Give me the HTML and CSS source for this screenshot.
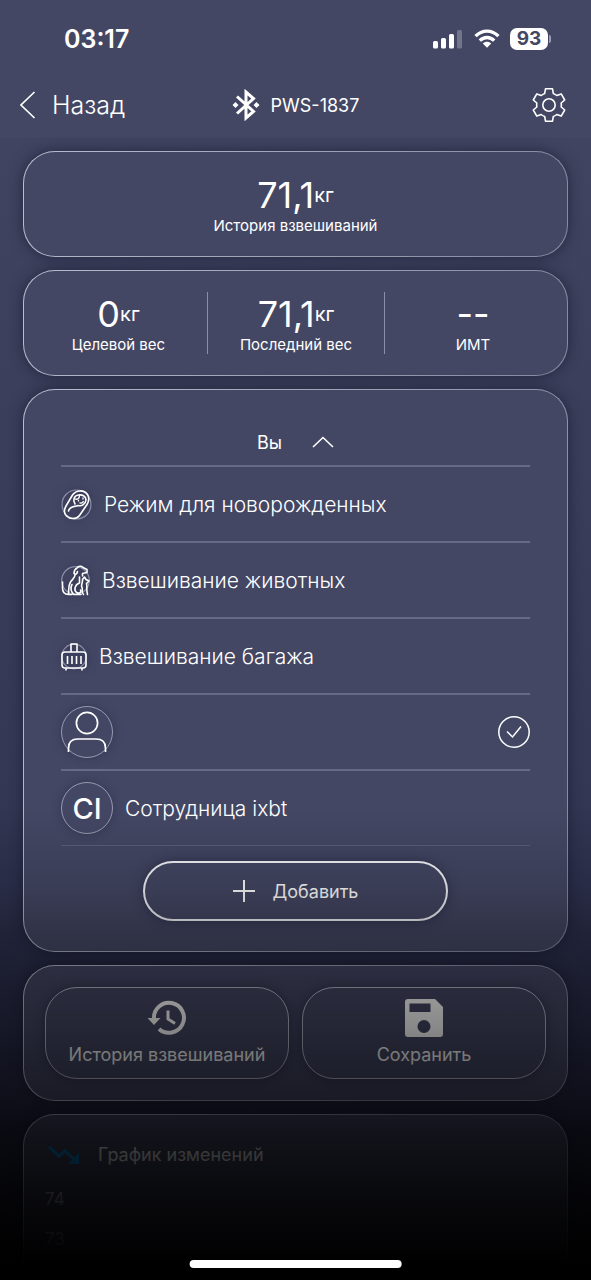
FILE: index.html
```html
<!DOCTYPE html>
<html lang="ru">
<head>
<meta charset="utf-8">
<meta name="viewport" content="width=device-width, initial-scale=1">
<title>PWS-1837</title>
<link rel="stylesheet" href="styles.css">
</head>
<body>
<div class="app">
  <div class="status">
    <span class="clock">03:17</span>
    <div class="status-icons">
      <svg width="31" height="20" viewBox="0 0 31 20" fill="#fff" aria-hidden="true">
        <rect x="0" y="12" width="5" height="7.500" rx="1.600"/>
        <rect x="8" y="9" width="5" height="10.500" rx="1.600"/>
        <rect x="16" y="5" width="5" height="14.500" rx="1.600"/>
        <rect x="24" y="1" width="5" height="18.500" rx="1.600" opacity=".25"/>
      </svg>
      <svg width="26" height="20" viewBox="0 0 26 20" fill="none" stroke="#fff" stroke-width="3.4" aria-hidden="true">
        <path d="M1.600 7.200C8 .4 18 .4 24.400 7.200"/>
        <path d="M5.800 11.600C10 7.500 16 7.500 20.200 11.600"/>
        <path d="M8.800 14.400C11 12.200 15 12.200 17.200 14.400L13 18.800Z" fill="#fff" stroke="none"/>
      </svg>
      <div class="battery"><span class="battery-level">93</span><span class="battery-tip"></span></div>
    </div>
  </div>

  <header class="topbar">
    <button class="back" type="button">
      <svg width="16" height="28" viewBox="0 0 16 28" fill="none" stroke="#fff" stroke-width="1.600" aria-hidden="true"><path d="M14.500 1L1 14L14.500 27"/></svg>
      <span>Назад</span>
    </button>
    <h1 class="device">
      <svg width="28" height="32" viewBox="0 0 28 32" fill="none" stroke="#fff" stroke-width="3" aria-hidden="true">
        <path d="M5 7.500L21.500 22.500L14 29V3L21.500 9.500L5 24.500"/>
        <path d="M3.500 13L6.500 16L3.500 19L.5 16ZM24.500 13L27.500 16L24.500 19L21.500 16Z" fill="#fff" stroke="none"/>
      </svg>
      <span>PWS-1837</span>
    </h1>
    <button class="settings" type="button" aria-label="Настройки">
      <svg width="34" height="36" viewBox="0 0 34 36" fill="none" stroke="#fff" stroke-width="1.600" stroke-linejoin="round" aria-hidden="true">
        <circle cx="17" cy="18" r="6.200"/>
        <path d="M13.500 1.800H20.500L21.300 6.400Q23 7 24.800 8.500L29.200 6.900L32.700 13L29.200 16Q29.500 18 29.200 20L32.700 23L29.200 29.100L24.800 27.500Q23 29 21.300 29.600L20.500 34.200H13.500L12.700 29.600Q11 29 9.200 27.500L4.800 29.100L1.300 23L4.800 20Q4.500 18 4.800 16L1.300 13L4.800 6.900L9.200 8.500Q11 7 12.700 6.400Z"/>
      </svg>
    </button>
  </header>

  <main class="content">
    <section class="card weight">
      <div class="value">71,1<span class="unit">кг</span></div>
      <div class="label">История взвешиваний</div>
    </section>

    <section class="card stats">
      <div class="stat"><div class="value">0<span class="unit">кг</span></div><div class="label">Целевой вес</div></div>
      <div class="stat"><div class="value">71,1<span class="unit">кг</span></div><div class="label">Последний вес</div></div>
      <div class="stat"><div class="value">--</div><div class="label">ИМТ</div></div>
    </section>

    <section class="card users">
      <button class="toggle" type="button" aria-expanded="true">
        <span>Вы</span>
        <svg width="22" height="12" viewBox="0 0 22 12" fill="none" stroke="#fff" stroke-width="1.600" aria-hidden="true"><path d="M1 11L11 1.500L21 11"/></svg>
      </button>
      <ul class="list">
        <li><button class="row" type="button">
          <svg class="glyph" width="31" height="31" viewBox="0 0 31 31" fill="none" stroke="#fff" stroke-width="1.600" stroke-linecap="round" aria-hidden="true">
            <circle cx="15.500" cy="15.500" r="14.500" stroke="#8b8fa8" stroke-width="1.200"/>
            <path d="M5 17L11.500 6C15 .8 23 .5 26.500 5.500C28.500 8.500 28 12 26 15.500L18.500 26.500C15.500 30.500 9 30.500 5.500 27C2.500 24 3 20.500 5 17Z"/>
            <path d="M7.500 22C8.500 17 13 18 17 16.500C21 17.500 24.500 15 25 11C25 7 21 5.500 17.500 6C13 6.500 11.500 11 14 15"/>
            <path d="M14 10C17 11 18.500 9 18.500 6.500M22 9V10M17.500 11.500V12M19 14C21 14.300 22 13.500 22.300 12.500" stroke-width="1.300"/>
          </svg>
          <span>Режим для новорожденных</span></button></li>
        <li><button class="row" type="button">
          <svg class="glyph" width="29" height="31" viewBox="0 0 29 31" fill="none" stroke="#fff" stroke-width="1.600" stroke-linecap="round" stroke-linejoin="round" aria-hidden="true">
            <circle cx="14.500" cy="15.500" r="13.800" stroke="#8b8fa8" stroke-width="1.200"/>
            <path d="M16 3C14 4 13 6.500 13 8.500C14.500 10 16 9 16.500 6.500M16 3C17.500 .8 20.500 .8 22 2.500L26 4.500V7.500L21.500 8.500V11"/>
            <path d="M14 10C14 13 11 14.500 9.500 17C7 21 8 24 7.500 29.500H11M7.500 29.500C3 29.500 1.500 27 1.500 23V17"/>
            <path d="M11 19.500C9 22.500 10 27.500 13 29.500H20M18.500 12V18C14 19.500 12.500 25 15.500 27.500C18 29 21 27 19.500 25"/>
            <path d="M21.500 14.500L23.500 12L25 14.500L28 16L25.500 18.500C26.500 22 25 24 26.500 29.500M21.500 14.500C22 18 19.500 20 21 22.500C22 25 20 27 22.500 29.500"/>
          </svg>
          <span>Взвешивание животных</span></button></li>
        <li><button class="row" type="button">
          <svg class="glyph" width="26" height="29" viewBox="0 0 26 29" fill="none" stroke="#fff" stroke-width="1.600" stroke-linejoin="round" aria-hidden="true">
            <circle cx="13" cy="14.500" r="12.300" stroke="#8b8fa8" stroke-width="1.200"/>
            <rect x="1" y="10" width="24" height="16" rx="3"/>
            <path d="M10 10V2H16V10M6.500 14V22M11 14V22M15.500 14V22M20 14V22M5 26V28.500M21 26V28.500"/>
          </svg>
          <span>Взвешивание багажа</span></button></li>
        <li><button class="row" type="button" aria-label="Вы">
          <span class="avatar">
            <svg width="40" height="42" viewBox="0 0 40 42" fill="none" stroke="#fff" stroke-width="1.700" aria-hidden="true"><circle cx="20" cy="12" r="10.600"/><path d="M1.500 41V37Q1.500 28 11 28H29Q38.500 28 38.500 37V41"/></svg>
          </span>
          <svg class="check" width="32" height="32" viewBox="0 0 32 32" fill="none" stroke="#fff" stroke-width="1.500" aria-hidden="true"><circle cx="16" cy="16" r="15.200"/><path d="M9 15.500L14.500 21L23 10.500"/></svg>
        </button></li>
        <li class="last"><button class="row" type="button"><span class="avatar">CI</span><span>Сотрудница ixbt</span></button></li>
      </ul>
      <button class="add" type="button">
        <svg width="22" height="22" viewBox="0 0 22 22" fill="none" stroke="#fff" stroke-width="2" aria-hidden="true"><path d="M11 0V22M0 11H22"/></svg>
        <span>Добавить</span>
      </button>
    </section>

    <section class="card actions">
      <button class="action" type="button">
        <svg width="40" height="40" viewBox="0 0 40 40" fill="none" stroke="#fff" stroke-width="4" aria-hidden="true">
          <path d="M7 21A15 15 0 1 1 12 31"/>
          <path d="M.5 20H13.500L7 27Z" fill="#fff" stroke="none"/>
          <path d="M21 12.500V21L28 25.500" stroke-width="3"/>
        </svg>
        <span>История взвешиваний</span>
      </button>
      <button class="action" type="button">
        <svg width="40" height="40" viewBox="0 0 40 40" aria-hidden="true"><path fill="#fff" fill-rule="evenodd" d="M4 1H31L39 9V36Q39 39 36 39H4Q1 39 1 36V4Q1 1 4 1ZM5.500 5.500V14H26.500V5.500ZM20 22A6.500 6.500 0 1 0 20 35A6.500 6.500 0 1 0 20 22Z"/></svg>
        <span>Сохранить</span>
      </button>
    </section>

    <section class="card chart">
      <h2 class="chart-title">
        <svg width="32" height="20" viewBox="0 0 32 20" fill="none" stroke="#0a8fe0" stroke-width="3" aria-hidden="true"><path d="M1 2L11 11L17 6L28 16"/><path d="M31 8V19H20Z" fill="#0a8fe0" stroke="none"/></svg>
        <span>График изменений</span>
      </h2>
      <div class="axis"><span>74</span><span>73</span></div>
    </section>
  </main>

  <div class="fade"></div>
  <div class="home"></div>
</div>
</body>
</html>
```
FILE: styles.css
```css
* {
  box-sizing: border-box;
}

body {
  margin: 0;
  background: #000;
  color: #fff;
  font-family: Inter, "Noto Sans", sans-serif;
}

button {
  margin: 0;
  padding: 0;
  border: 0;
  background: none;
  color: inherit;
  font: inherit;
  text-align: left;
}

svg {
  display: block;
  flex: none;
}

.app {
  position: relative;
  display: flex;
  flex-direction: column;
  height: 100vh;
  overflow: hidden;
  background: linear-gradient(#444764, #3b3f5c 30%, #343855 60%, #2a2d4b 80%, #1c1e34);
}

.status {
  display: flex;
  align-items: center;
  justify-content: space-between;
  flex: none;
  height: 78px;
  padding: 0 40px 0 64px;
  background: #444764;
}

.clock {
  font-size: 25px;
  font-weight: 600;
}

.status-icons {
  display: flex;
  align-items: center;
  gap: 10px;
}

.battery {
  display: flex;
  align-items: center;
  gap: 1px;
}

.battery-level {
  width: 38px;
  border-radius: 7px;
  background: #fff;
  color: #444764;
  font-size: 19px;
  font-weight: 700;
  line-height: 22px;
  text-align: center;
}

.battery-tip {
  width: 2px;
  height: 8px;
  border-radius: 0 2px 2px 0;
  background: #9a9cb0;
}

.topbar {
  display: grid;
  grid-template-columns: 1fr auto 1fr;
  align-items: center;
  flex: none;
  height: 60px;
  padding: 0 20px 6px;
  background: #444764;
}

.back {
  display: flex;
  align-items: center;
  gap: 16px;
  font-size: 25px;
  font-weight: 300;
}

.device {
  display: flex;
  align-items: center;
  gap: 11px;
  margin: 0;
  font-size: 18px;
  font-weight: 400;
}

.settings {
  justify-self: end;
  padding-right: 5px;
}

.content {
  display: flex;
  flex-direction: column;
  flex: 1;
  gap: 13px;
  min-height: 0;
  padding: 13px 23px 0;
}

.card {
  flex: none;
  border: 1px solid transparent;
  border-radius: 32px;
  background:
    linear-gradient(#444764, #444764) padding-box,
    linear-gradient(100deg, #babdd0, #8689a1) border-box;
  box-shadow: 0 0 14px rgba(20, 24, 44, 0.65);
}

.weight {
  padding: 21px 0;
  text-align: center;
}

.value {
  display: flex;
  align-items: center;
  justify-content: center;
  font-size: 36px;
  font-weight: 400;
  line-height: 44px;
}

.unit {
  font-size: 20px;
}

.label {
  font-size: 15px;
  line-height: 18px;
}

.stats {
  display: grid;
  grid-template-columns: repeat(3, 1fr);
  padding: 21px 6px;
}

.stat {
  text-align: center;
}

.stat + .stat {
  border-left: 1px solid #8b8ea6;
}

.users {
  padding: 29px 37px 30px;
}

.toggle {
  display: flex;
  align-items: center;
  justify-content: center;
  gap: 30px;
  width: 100%;
  height: 46px;
  font-size: 18px;
}

.list {
  margin: 0;
  padding: 0;
  list-style: none;
  border-top: 2px solid #676a84;
}

.list li {
  border-bottom: 2px solid #676a84;
}

.list .last {
  border-bottom: 1px solid #5b5e78;
}

.row {
  display: flex;
  align-items: center;
  gap: 12px;
  width: 100%;
  height: 74px;
  font-size: 21px;
  font-weight: 300;
}

.glyph {
  overflow: visible;
  filter: drop-shadow(0 0 5px rgba(22, 26, 50, 0.5));
}

.avatar {
  display: flex;
  align-items: center;
  justify-content: center;
  flex: none;
  width: 52px;
  height: 52px;
  border: 1px solid #9699af;
  border-radius: 50%;
  box-shadow: 0 0 10px rgba(22, 26, 50, 0.35);
  font-size: 29px;
  font-weight: 500;
}

.check {
  margin-left: auto;
}

.add {
  display: flex;
  align-items: center;
  justify-content: center;
  gap: 18px;
  width: 65%;
  height: 60px;
  margin: 15px auto 0;
  border: 2px solid #f4f5fa;
  border-radius: 30px;
  box-shadow: 0 0 12px rgba(22, 26, 50, 0.5);
  font-size: 18px;
}

.actions {
  display: grid;
  grid-template-columns: 1fr 1fr;
  gap: 13px;
  padding: 21px;
}

.action {
  display: flex;
  flex-direction: column;
  align-items: center;
  gap: 4px;
  height: 92px;
  padding-top: 10px;
  border: 1px solid #b4b7ca;
  border-radius: 32px;
  box-shadow: 0 0 12px rgba(22, 26, 50, 0.5);
  font-size: 18px;
  font-weight: 400;
  line-height: 26px;
}

.chart {
  flex: 1 0 160px;
  padding: 28px 21px 0;
  border-bottom: 0;
  border-radius: 32px 32px 0 0;
}

.chart-title {
  display: flex;
  align-items: center;
  gap: 18px;
  margin: 0;
  padding-left: 3px;
  font-size: 18px;
  font-weight: 400;
  line-height: 24px;
}

.axis {
  display: flex;
  flex-direction: column;
  margin-top: 12px;
  color: #c8cad6;
  font-size: 17px;
  line-height: 40px;
}

.fade {
  position: absolute;
  inset: auto 0 0;
  height: 37%;
  background: linear-gradient(
    transparent,
    rgba(0, 0, 0, 0.14) 17%,
    rgba(0, 0, 0, 0.3) 28%,
    rgba(0, 0, 0, 0.46) 46%,
    rgba(0, 0, 0, 0.62) 61%,
    rgba(0, 0, 0, 0.73) 68%,
    rgba(0, 0, 0, 0.88) 83%,
    #000 97%
  );
  pointer-events: none;
}

.home {
  position: absolute;
  bottom: 12px;
  left: 50%;
  width: 36%;
  height: 8px;
  border-radius: 4px;
  background: #fff;
  transform: translateX(-50%);
}
```
